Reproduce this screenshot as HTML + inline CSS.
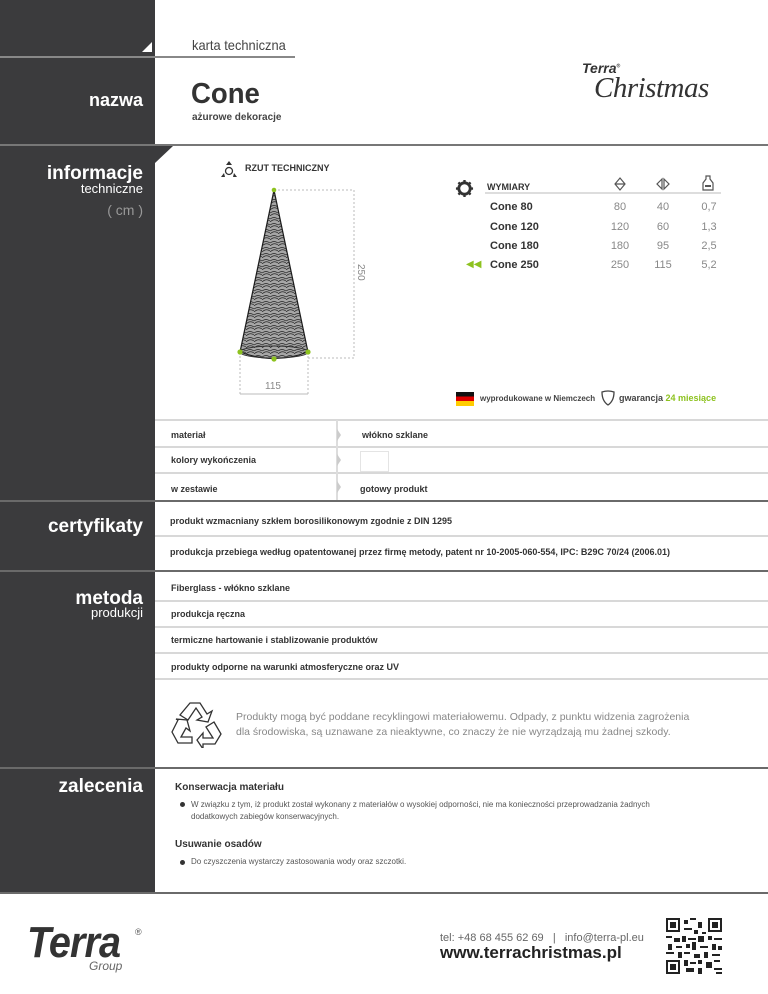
<!DOCTYPE html>
<html><head><meta charset="utf-8"><style>
*{margin:0;padding:0;box-sizing:border-box}
body{width:768px;height:994px;position:relative;background:#fff;font-family:"Liberation Sans",sans-serif;color:#333;overflow:hidden}
.a{position:absolute;white-space:nowrap}
.side{position:absolute;left:0;top:0;width:155px;height:893px;background:#3b3b3d}
.lbl{position:absolute;right:625px;color:#fff;text-align:right;font-weight:bold}
.hl{position:absolute;height:2px;background:#d8d8d8;left:155px;width:613px}
.dl{position:absolute;height:3px;background:#6a6a6a;left:0;width:768px}
.t{font-size:9px;font-weight:bold;color:#333}
.v{font-size:11px;color:#888;text-align:center;width:40px}
.n{font-size:11px;font-weight:bold;color:#333}
</style></head><body>
<div class="side"></div>
<!-- header -->
<div class="a" style="left:0;top:56px;width:295px;height:2px;background:#888"></div>
<div class="a" style="left:142px;top:42px;width:0;height:0;border-left:10px solid transparent;border-bottom:10px solid #fff"></div>
<div class="a" style="left:192px;top:37px;font-size:14px;color:#444;transform:scaleX(.92);transform-origin:left">karta techniczna</div>
<div class="lbl" style="top:90px;font-size:18px">nazwa</div>
<div class="a" style="left:191px;top:78px;font-size:29px;font-weight:bold;color:#333;transform:scaleX(.95);transform-origin:left">Cone</div>
<div class="a" style="left:192px;top:112px;font-size:10px;font-weight:bold;color:#444">ażurowe dekoracje</div>
<div class="a" style="left:582px;top:60px;font-size:14px;font-weight:bold;font-style:italic;color:#333">Terra<sup style="font-size:5px">®</sup></div>
<div class="a" style="left:594px;top:72px;font-size:29px;font-family:'Liberation Serif',serif;font-style:italic;color:#333;letter-spacing:-.5px">Christmas</div>
<div class="dl" style="top:144px;height:2px;background:#777"></div>
<div class="a" style="left:155px;top:146px;width:0;height:0;border-right:18px solid transparent;border-top:17px solid #3b3b3d"></div>
<div class="lbl" style="top:163px;font-size:19px">informacje</div>
<div class="lbl" style="top:181px;font-size:13px;font-weight:normal">techniczne</div>
<div class="lbl" style="top:202px;font-size:14px;font-weight:normal;color:#999">( cm )</div>
<!-- rzut -->
<svg class="a" style="left:220px;top:160px" width="18" height="18" viewBox="0 0 18 18"><path d="M9 1 L6 5 H12 Z" fill="#333"/><circle cx="9" cy="11" r="3.5" fill="none" stroke="#333" stroke-width="1.3"/><path d="M1 17 L4 13 L5 17 Z M17 17 L14 13 L13 17 Z" fill="#333"/></svg>
<div class="a" style="left:245px;top:163px;font-size:9px;font-weight:bold;color:#333">RZUT TECHNICZNY</div>
<svg class="a" style="left:230px;top:180px" width="140" height="220" viewBox="0 0 140 220">
<defs><pattern id="p" width="8" height="6" patternUnits="userSpaceOnUse"><path d="M0 3 Q4 0 8 3 M0 6 Q4 2 8 5" stroke="#333" stroke-width=".7" fill="none"/></pattern></defs>
<path d="M44 10 L10 172 Q44 185 78 172 Z" fill="url(#p)" stroke="#222" stroke-width="1.2"/>
<path d="M44 10 L10 172 Q44 185 78 172 Z" fill="#000" opacity=".35"/>
<ellipse cx="44" cy="172" rx="34" ry="6" fill="none" stroke="#333"/>
<path d="M44 10 H124 M78 178 H124 M124 10 V178" stroke="#bbb" stroke-width="1" stroke-dasharray="2,2" fill="none"/>
<path d="M10 172 V214 M78 172 V214" stroke="#bbb" stroke-dasharray="2,2"/>
<path d="M10 214 H78" stroke="#bbb"/>
<circle cx="44" cy="10" r="2.3" fill="#8dc21f"/><circle cx="10" cy="172" r="2.6" fill="#8dc21f"/><circle cx="78" cy="172" r="2.6" fill="#8dc21f"/><circle cx="44" cy="179" r="2.6" fill="#8dc21f"/>
<text x="0" y="0" transform="translate(128,84) rotate(90)" font-size="10" fill="#888" font-family="Liberation Sans">250</text>
<text x="35" y="209" font-size="10" fill="#888" font-family="Liberation Sans">115</text>
</svg>
<!-- table -->
<svg class="a" style="left:455px;top:179px" width="19" height="19" viewBox="0 0 20 20"><circle cx="10" cy="10" r="6" fill="none" stroke="#333" stroke-width="3"/><path d="M10 1V4M10 16V19M1 10H4M16 10H19M3.6 3.6L5.8 5.8M14.2 14.2L16.4 16.4M3.6 16.4L5.8 14.2M14.2 5.8L16.4 3.6" stroke="#333" stroke-width="2.5"/></svg>
<div class="a" style="left:487px;top:182px;font-size:9px;font-weight:bold">WYMIARY</div>
<div class="a" style="left:485px;top:192px;width:236px;height:2px;background:#ddd"></div>
<svg class="a" style="left:613px;top:177px" width="14" height="14" viewBox="0 0 14 14"><path d="M7 1 L12 7 L7 13 L2 7 Z M2 7 H12" fill="none" stroke="#555" stroke-width="1.2"/></svg>
<svg class="a" style="left:656px;top:177px" width="14" height="14" viewBox="0 0 14 14"><path d="M6 2 L1 7 L6 12 Z M8 2 L13 7 L8 12 Z" fill="none" stroke="#555" stroke-width="1.2"/></svg>
<svg class="a" style="left:702px;top:175px" width="12" height="16" viewBox="0 0 12 16"><path d="M4 1H8V4 L11 8 V15 H1 V8 L4 4Z" fill="none" stroke="#555" stroke-width="1.2"/><rect x="3" y="10" width="6" height="2" fill="#555"/></svg>
<div class="a n" style="left:490px;top:201px">Cone 80</div><div class="a v" style="left:600px;top:201px">80</div><div class="a v" style="left:643px;top:201px">40</div><div class="a v" style="left:689px;top:201px">0,7</div>
<div class="a n" style="left:490px;top:221px">Cone 120</div><div class="a v" style="left:600px;top:221px">120</div><div class="a v" style="left:643px;top:221px">60</div><div class="a v" style="left:689px;top:221px">1,3</div>
<div class="a n" style="left:490px;top:240px">Cone 180</div><div class="a v" style="left:600px;top:240px">180</div><div class="a v" style="left:643px;top:240px">95</div><div class="a v" style="left:689px;top:240px">2,5</div>
<div class="a" style="left:466px;top:259px;font-size:10px;color:#8dc21f">◀◀</div>
<div class="a n" style="left:490px;top:259px">Cone 250</div><div class="a v" style="left:600px;top:259px">250</div><div class="a v" style="left:643px;top:259px">115</div><div class="a v" style="left:689px;top:259px">5,2</div>
<!-- flag/guarantee -->
<div class="a" style="left:456px;top:392px;width:18px;height:14px;background:linear-gradient(#111 33%,#d00 33% 66%,#fc0 66%)"></div>
<div class="a" style="left:480px;top:394px;font-size:8px;font-weight:bold;color:#444">wyprodukowane w Niemczech</div>
<svg class="a" style="left:601px;top:390px" width="14" height="16" viewBox="0 0 14 16"><path d="M1 2 Q7 0 13 2 Q13 11 7 15 Q1 11 1 2Z" fill="none" stroke="#444" stroke-width="1.3"/></svg>
<div class="a" style="left:619px;top:393px;font-size:9px;font-weight:bold;color:#444">gwarancja <span style="color:#8dc21f">24 miesiące</span></div>
<!-- material rows -->
<div class="hl" style="top:419px"></div>
<div class="hl" style="top:446px"></div>
<div class="hl" style="top:472px"></div>
<div class="a" style="left:336px;top:420px;width:2px;height:80px;background:#ddd"></div>
<div class="a" style="left:337px;top:429px;border-left:4px solid #ccc;border-top:6px solid transparent;border-bottom:6px solid transparent"></div>
<div class="a" style="left:337px;top:454px;border-left:4px solid #ccc;border-top:6px solid transparent;border-bottom:6px solid transparent"></div>
<div class="a" style="left:337px;top:481px;border-left:4px solid #ccc;border-top:6px solid transparent;border-bottom:6px solid transparent"></div>
<div class="a t" style="left:171px;top:430px">materiał</div>
<div class="a t" style="left:362px;top:430px">włókno szklane</div>
<div class="a t" style="left:171px;top:455px">kolory wykończenia</div>
<div class="a" style="left:360px;top:451px;width:29px;height:21px;border:1px solid #e4e4e4"></div>
<div class="a t" style="left:171px;top:484px">w zestawie</div>
<div class="a t" style="left:360px;top:484px">gotowy produkt</div>
<div class="dl" style="top:500px;height:2px"></div>
<!-- certyfikaty -->
<div class="lbl" style="top:516px;font-size:19px">certyfikaty</div>
<div class="a t" style="left:170px;top:516px">produkt wzmacniany szkłem borosilikonowym zgodnie z DIN 1295</div>
<div class="hl" style="top:535px"></div>
<div class="a t" style="left:170px;top:547px">produkcja przebiega według opatentowanej przez firmę metody, patent nr 10-2005-060-554, IPC: B29C 70/24 (2006.01)</div>
<div class="dl" style="top:570px;height:2px"></div>
<!-- metoda -->
<div class="lbl" style="top:588px;font-size:19px">metoda</div>
<div class="lbl" style="top:605px;font-size:13px;font-weight:normal">produkcji</div>
<div class="a t" style="left:171px;top:583px">Fiberglass - włókno szklane</div>
<div class="hl" style="top:600px"></div>
<div class="a t" style="left:171px;top:609px">produkcja ręczna</div>
<div class="hl" style="top:626px"></div>
<div class="a t" style="left:171px;top:635px">termiczne hartowanie i stablizowanie produktów</div>
<div class="hl" style="top:652px"></div>
<div class="a t" style="left:171px;top:662px">produkty odporne na warunki atmosferyczne oraz UV</div>
<div class="hl" style="top:678px"></div>
<svg class="a" style="left:170px;top:700px" width="52" height="48" viewBox="0 0 52 48"><g fill="none" stroke="#333" stroke-width="1.3"><path d="M20 3 L30 3 L37 14 L42 11 L38 22 L27 20 L32 17 L26 8 L18 20 L10 15 Z"/><path d="M44 22 L51 34 L45 44 L33 44 L33 49 L27 40 L33 33 L33 38 L43 38 L36 27 Z"/><path d="M8 20 L2 32 L8 43 L22 43 L22 37 L11 37 L16 28 L20 31 L17 20 L6 19 Z"/></g></svg>
<div class="a" style="left:236px;top:710px;font-size:10.5px;color:#888;line-height:15px">Produkty mogą być poddane recyklingowi materiałowemu. Odpady, z punktu widzenia zagrożenia<br>dla środowiska, są uznawane za nieaktywne, co znaczy że nie wyrządzają mu żadnej szkody.</div>
<div class="dl" style="top:767px;height:2px"></div>
<!-- zalecenia -->
<div class="lbl" style="top:776px;font-size:19px">zalecenia</div>
<div class="a" style="left:175px;top:782px;font-size:10px;font-weight:bold;color:#333">Konserwacja materiału</div>
<div class="a" style="left:180px;top:802px;width:5px;height:5px;border-radius:50%;background:#333"></div>
<div class="a" style="left:191px;top:799px;font-size:8px;color:#555;line-height:12px">W związku z tym, iż produkt został wykonany z materiałów o wysokiej odporności, nie ma konieczności przeprowadzania żadnych<br>dodatkowych zabiegów konserwacyjnych.</div>
<div class="a" style="left:175px;top:839px;font-size:10px;font-weight:bold;color:#333">Usuwanie osadów</div>
<div class="a" style="left:180px;top:860px;width:5px;height:5px;border-radius:50%;background:#333"></div>
<div class="a" style="left:191px;top:857px;font-size:8px;color:#555">Do czyszczenia wystarczy zastosowania wody oraz szczotki.</div>
<div class="dl" style="top:892px;height:2px"></div>
<!-- footer -->
<div class="a" style="left:27px;top:918px;font-size:44px;font-weight:bold;font-style:italic;color:#333;letter-spacing:-1px;transform:scaleX(.9);transform-origin:left">Terra</div>
<div class="a" style="left:135px;top:927px;font-size:9px;color:#555">®</div>
<div class="a" style="left:89px;top:959px;font-size:12px;font-style:italic;color:#666">Group</div>
<div class="a" style="left:440px;top:932px;font-size:11px;color:#666">tel: +48 68 455 62 69 &nbsp;&nbsp;|&nbsp;&nbsp; info@terra-pl.eu</div>
<div class="a" style="left:440px;top:943px;font-size:17px;font-weight:bold;color:#222">www.terrachristmas.pl</div>
<svg class="a" style="left:666px;top:918px" width="56" height="56" viewBox="0 0 28 28" shape-rendering="crispEdges">
<rect width="28" height="28" fill="#fff"/>
<g fill="#222"><rect x="0" y="0" width="7" height="7"/><rect x="21" y="0" width="7" height="7"/><rect x="0" y="21" width="7" height="7"/></g>
<g fill="#fff"><rect x="1" y="1" width="5" height="5"/><rect x="22" y="1" width="5" height="5"/><rect x="1" y="22" width="5" height="5"/></g>
<g fill="#222"><rect x="2" y="2" width="3" height="3"/><rect x="23" y="2" width="3" height="3"/><rect x="2" y="23" width="3" height="3"/>
<path d="M9 1h2v2h-2zM12 0h3v1h-3zM16 2h2v3h-2zM9 5h4v1h-4zM14 6h2v2h-2zM18 7h2v1h-2zM0 9h3v1h-3zM4 10h3v2h-3zM8 9h2v3h-2zM11 10h4v1h-4zM16 9h3v3h-3zM21 9h2v2h-2zM24 10h4v1h-4zM1 13h2v3h-2zM5 14h3v1h-3zM10 13h2v2h-2zM13 12h2v4h-2zM17 14h4v1h-4zM23 13h2v3h-2zM26 14h2v2h-2zM0 17h4v1h-4zM6 17h2v3h-2zM9 17h3v1h-3zM14 18h3v2h-3zM19 17h2v3h-2zM23 18h4v1h-4zM9 21h2v3h-2zM12 22h3v1h-3zM16 21h2v2h-2zM20 22h3v3h-3zM24 21h3v1h-3zM10 25h4v2h-4zM16 25h2v3h-2zM24 25h4v1h-4zM25 27h3v1h-3z"/></g>
</svg>
</body></html>
